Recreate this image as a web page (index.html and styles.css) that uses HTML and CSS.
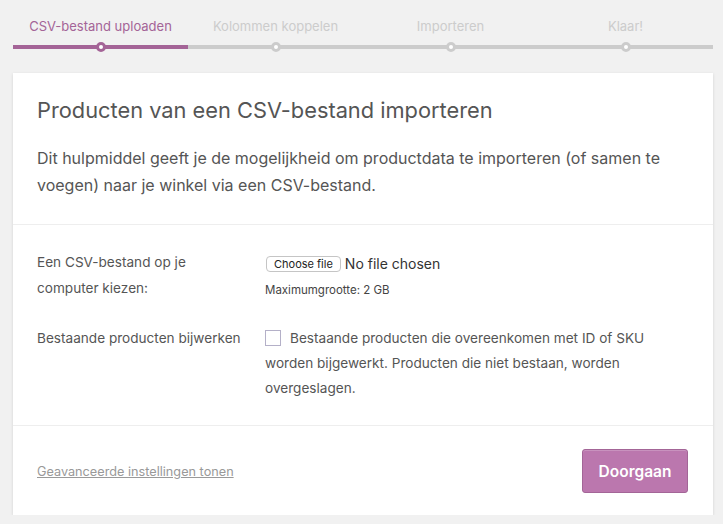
FILE: index.html
```html
<!DOCTYPE html>
<html lang="nl">
<head>
<meta charset="utf-8">
<title>Producten importeren</title>
<link rel="stylesheet" href="styles.css">
</head>
<body>
<ol class="steps">
  <li class="step done active"><span class="step-label">CSV-bestand uploaden</span><span class="dot"></span></li>
  <li class="step"><span class="step-label">Kolommen koppelen</span><span class="dot"></span></li>
  <li class="step"><span class="step-label">Importeren</span><span class="dot"></span></li>
  <li class="step"><span class="step-label">Klaar!</span><span class="dot"></span></li>
</ol>
<form class="card">
  <header class="card-header">
    <h2 class="title">Producten van een CSV-bestand importeren</h2>
    <p class="intro">Dit hulpmiddel geeft je de mogelijkheid om productdata te importeren (of samen te voegen) naar je winkel via een CSV-bestand.</p>
  </header>
  <section class="card-body">
    <div class="row">
      <label class="row-label" for="upload">Een CSV-bestand op je computer kiezen:</label>
      <div class="row-field">
        <div class="file-line"><span class="file-btn">Choose file</span><span class="file-name">No file chosen</span></div>
        <small class="hint">Maximumgrootte: 2 GB</small>
      </div>
    </div>
    <div class="row">
      <div class="row-label">Bestaande producten bijwerken</div>
      <div class="row-field">
        <label class="check-text"><input type="checkbox" class="check">Bestaande producten die overeenkomen met ID of SKU worden bijgewerkt. Producten die niet bestaan, worden overgeslagen.</label>
      </div>
    </div>
  </section>
  <footer class="card-footer">
    <a class="adv-link" href="#">Geavanceerde instellingen tonen</a>
    <button type="button" class="btn-primary">Doorgaan</button>
  </footer>
</form>
</body>
</html>
```
FILE: styles.css
```css
* { box-sizing: border-box; }
body {
  margin: 0;
  background: #f1f1f1;
  font-family: Inter, "Liberation Sans", Arial, sans-serif;
  color: #555;
}
.steps {
  list-style: none;
  margin: 0 10px 0 13px;
  padding: 0;
  display: flex;
}
.step {
  flex: 1;
  position: relative;
  text-align: center;
  padding: 17px 0 10px;
  border-bottom: 4px solid #ccc;
  color: #ccc;
  font-size: 13px;
  line-height: 18px;
}
.step.done { border-bottom-color: #a46497; }
.step.active { color: #a46497; }
.dot {
  position: absolute;
  left: 50%;
  bottom: -7px;
  width: 10px;
  height: 10px;
  margin-left: -5px;
  border-radius: 50%;
  background: #fff;
  border: 3px solid #ccc;
}
.step.done .dot { border-color: #a46497; }

.card {
  margin: 24px 10px 0 13px;
  background: #fff;
  box-shadow: 0 1px 3px rgba(0,0,0,0.13);
}
.card-header {
  padding: 24px 24px 25px;
  border-bottom: 1px solid #eee;
}
.title {
  margin: 0 0 22px;
  font-size: 21.8px;
  line-height: 26px;
  font-weight: 400;
  color: #555;
}
.intro {
  margin: 0;
  font-size: 16px;
  line-height: 27px;
}
.card-body {
  padding: 24px 24px 24px;
  border-bottom: 1px solid #eee;
  display: flex;
  flex-direction: column;
  gap: 24px;
  font-size: 13.6px;
}
.row { display: flex; }
.row-label {
  width: 228px;
  flex: none;
  padding-right: 16px;
  line-height: 26px;
}
.row-field { flex: 1; padding-right: 20px; }
.file-line {
  display: flex;
  align-items: center;
  padding-top: 5px;
  line-height: 20px;
}
.file-btn {
  font-size: 11px;
  line-height: 14px;
  color: #222;
  border: 1px solid #c5c5c5;
  border-radius: 4px;
  padding: 0 7px;
  margin: 0 4px 0 1px;
  background: #fff;
}
.file-name { color: #333; font-size: 14px; }
.hint {
  display: block;
  margin-top: 8px;
  font-size: 11.5px;
  line-height: 16px;
  color: #444;
}
.check-text {
  display: block;
  line-height: 25px;
  padding-top: 1px;
}
.check {
  appearance: none;
  -webkit-appearance: none;
  width: 16px;
  height: 16px;
  margin: 0 9px 0 0;
  vertical-align: -3px;
  border: 1px solid #b4b0c8;
  background: #fff;
}
.card-footer {
  padding: 23px 25px 22px 24px;
  display: flex;
  align-items: center;
  justify-content: space-between;
}
.adv-link {
  color: #999;
  font-size: 12.7px;
  text-decoration: underline;
}
.btn-primary {
  width: 106px;
  height: 44px;
  background: #bb77ae;
  border: 1px solid #a36597;
  border-radius: 3px;
  color: #fff;
  font-family: inherit;
  font-size: 15.5px;
  font-weight: 600;
  box-shadow: inset 0 1px 0 rgba(255,255,255,0.2);
}
```
